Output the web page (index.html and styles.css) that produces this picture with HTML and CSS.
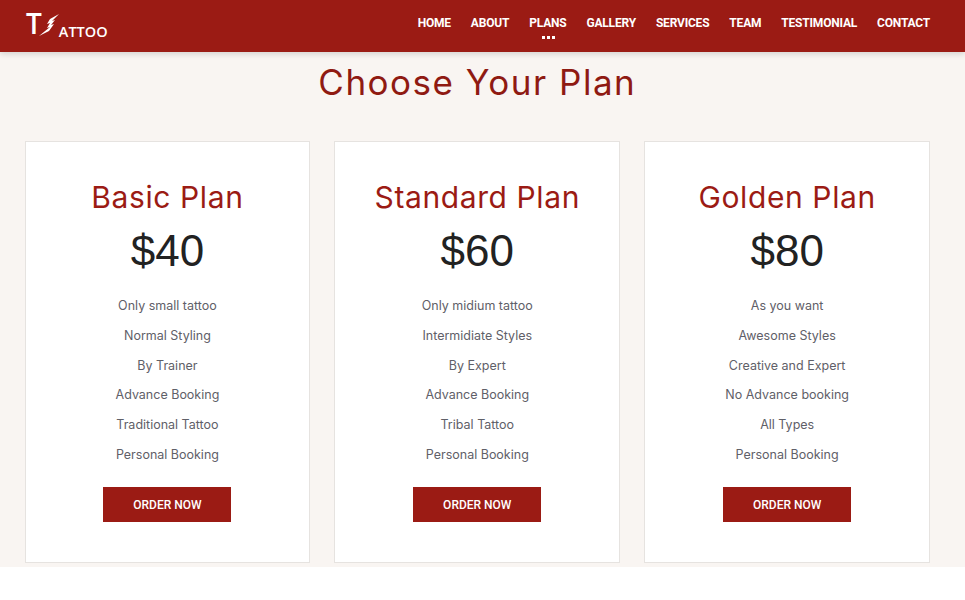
FILE: index.html
```html
<!DOCTYPE html>
<html lang="en">
<head>
  <meta charset="UTF-8">
  <meta name="viewport" content="width=device-width, initial-scale=1.0">
  <title>Tattoo Plans</title>
  <link rel="stylesheet" href="styles.css">
</head>
<body>
  <header class="navbar">
    <a class="logo" href="#">
      <span class="logo-t">T</span>
      <svg class="logo-bolt" viewBox="0 0 20 22" xmlns="http://www.w3.org/2000/svg">
        <path d="M20 0 L11 5 L8 10 L11 9 L8 14 L11 13 L0 22 L10 17 L15 10 L12 11 L16 6 L13 7 Z" fill="#fff"></path>
      </svg>
      <span class="logo-rest">ATTOO</span>
    </a>
    <nav class="nav-links">
      <a href="#">HOME</a>
      <a href="#">ABOUT</a>
      <a href="#" class="active">PLANS</a>
      <a href="#">GALLERY</a>
      <a href="#">SERVICES</a>
      <a href="#">TEAM</a>
      <a href="#">TESTIMONIAL</a>
      <a href="#">CONTACT</a>
    </nav>
  </header>

  <section class="plans">
    <h1 class="plans-title">Choose Your Plan</h1>
    <div class="plan-grid">
      <div class="plan-card">
        <h2>Basic Plan</h2>
        <div class="price">$40</div>
        <ul>
          <li>Only small tattoo</li>
          <li>Normal Styling</li>
          <li>By Trainer</li>
          <li>Advance Booking</li>
          <li>Traditional Tattoo</li>
          <li>Personal Booking</li>
        </ul>
        <a class="order-btn" href="#">ORDER NOW</a>
      </div>
      <div class="plan-card">
        <h2>Standard Plan</h2>
        <div class="price">$60</div>
        <ul>
          <li>Only midium tattoo</li>
          <li>Intermidiate Styles</li>
          <li>By Expert</li>
          <li>Advance Booking</li>
          <li>Tribal Tattoo</li>
          <li>Personal Booking</li>
        </ul>
        <a class="order-btn" href="#">ORDER NOW</a>
      </div>
      <div class="plan-card">
        <h2>Golden Plan</h2>
        <div class="price">$80</div>
        <ul>
          <li>As you want</li>
          <li>Awesome Styles</li>
          <li>Creative and Expert</li>
          <li>No Advance booking</li>
          <li>All Types</li>
          <li>Personal Booking</li>
        </ul>
        <a class="order-btn" href="#">ORDER NOW</a>
      </div>
    </div>
  </section>
</body>
</html>
```
FILE: styles.css
```css
body {
  margin: 0;
  background-color: #fff;
  font-family: Inter, "Open Sans", sans-serif;
}

a {
  text-decoration: none;
}

.navbar {
  position: relative;
  display: flex;
  justify-content: space-between;
  align-items: center;
  height: 52px;
  padding: 0 35px 0 26px;
  background-color: #9b1b14;
  box-shadow: 0 2px 6px rgba(0, 0, 0, 0.15);
}

.logo {
  display: flex;
  align-items: flex-start;
  height: 26px;
  margin-top: -2px;
  color: #fff;
}

.logo-t {
  font-family: "Open Sans", sans-serif;
  font-size: 28px;
  font-weight: 600;
  line-height: 26px;
  margin-top: -2px;
}

.logo-bolt {
  width: 20px;
  height: 22px;
  margin: 2px 0 0 -3px;
}

.logo-rest {
  align-self: flex-end;
  font-family: "Open Sans", sans-serif;
  font-size: 14.5px;
  font-weight: 600;
  line-height: 16px;
  margin-bottom: -2px;
}

.nav-links {
  display: flex;
  gap: 20px;
  margin-top: -7px;
}

.nav-links a {
  position: relative;
  color: #fff;
  font-family: Roboto, sans-serif;
  font-size: 12px;
  font-weight: 700;
  letter-spacing: -0.2px;
  line-height: 16px;
}

.nav-links a.active::after {
  content: "";
  position: absolute;
  left: 50%;
  top: 21px;
  width: 3px;
  height: 3px;
  margin-left: -1px;
  background-color: #fff;
  box-shadow: -5px 0 0 #fff, 5px 0 0 #fff;
}

.plans {
  height: 515px;
  box-sizing: border-box;
  padding: 0 35px 4px 24.6px;
  background-color: #f9f5f2;
}

.plans-title {
  margin: 0;
  padding-top: 8px;
  height: 81px;
  box-sizing: content-box;
  color: #8f1a12;
  font-size: 35px;
  font-weight: 400;
  line-height: 44px;
  text-align: center;
  letter-spacing: 1.5px;
}

.plan-grid {
  display: grid;
  grid-template-columns: repeat(3, 1fr);
  gap: 24.2px;
  height: 422px;
}

.plan-card {
  display: flex;
  flex-direction: column;
  align-items: center;
  padding-top: 36px;
  background-color: #fff;
  border: 1px solid #e6e3e0;
}

.plan-card h2 {
  margin: 0;
  color: #9b1b14;
  font-size: 30px;
  font-weight: 400;
  line-height: 38px;
  letter-spacing: 0.6px;
}

.price {
  margin-top: 11px;
  color: #222;
  font-family: "Liberation Sans", sans-serif;
  font-size: 44px;
  line-height: 48px;
}

.plan-card ul {
  list-style: none;
  margin: 16px 0 0;
  padding: 0;
  text-align: center;
}

.plan-card li {
  color: #5f6068;
  font-size: 12.5px;
  line-height: 29.8px;
}

.order-btn {
  display: block;
  width: 128px;
  height: 35px;
  margin-top: 17px;
  color: #fff;
  background-color: #9b1b14;
  font-family: Roboto, sans-serif;
  font-size: 12px;
  font-weight: 500;
  line-height: 37px;
  text-align: center;
}
```
